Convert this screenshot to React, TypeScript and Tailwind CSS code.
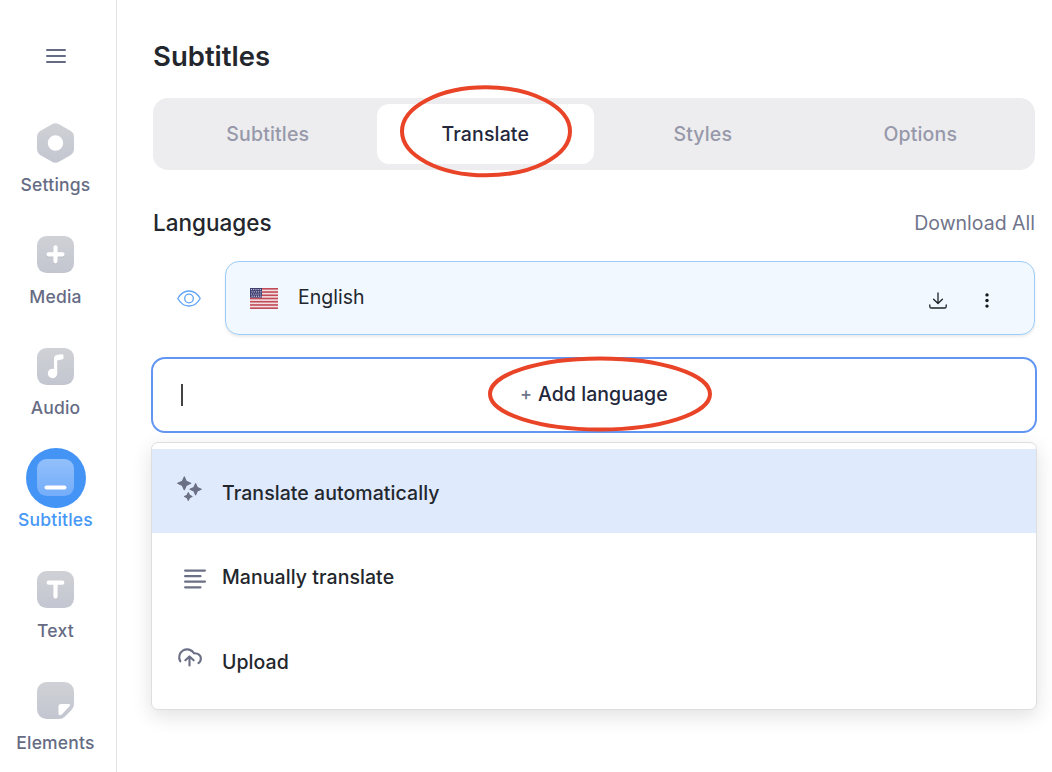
import { useState } from "react";

const TileGradient = ({ id }: { id: string }) => (
  <defs>
    <linearGradient id={id} x1="0" y1="0" x2="0" y2="1">
      <stop offset="0" stopColor="#d0d1d6" />
      <stop offset="1" stopColor="#c3c6d0" />
    </linearGradient>
  </defs>
);

const SettingsIcon = () => (
  <svg width="37" height="40" viewBox="0 0 37 40">
    <TileGradient id="settings" />
    <path
      fill="url(#settings)"
      fillRule="evenodd"
      d="M15 1.2a7 7 0 0 1 7 0L33 7.6a7.5 7.5 0 0 1 4 6.4v12a7.5 7.5 0 0 1-4 6.4L22 38.8a7 7 0 0 1-7 0L4 32.4A7.5 7.5 0 0 1 0 26V14a7.5 7.5 0 0 1 4-6.4ZM18.500 12.300a7.700 7.700 0 1 0 0 15.400a7.700 7.700 0 0 0 0-15.400Z"
    />
  </svg>
);

const MediaIcon = () => (
  <svg width="37" height="37" viewBox="0 0 37 37">
    <TileGradient id="media" />
    <rect width="37" height="37" rx="9.500" fill="url(#media)" />
    <path d="M18.500 11.300v14M11.500 18.300h14" stroke="#b3b6c1" strokeWidth="4.600" strokeLinecap="round" transform="translate(0 1)" opacity=".5" />
    <path d="M18.500 11.300v14M11.500 18.300h14" stroke="#fff" strokeWidth="4.200" strokeLinecap="round" />
  </svg>
);

const AudioIcon = () => (
  <svg width="37" height="37" viewBox="0 0 37 37">
    <TileGradient id="audio" />
    <rect width="37" height="37" rx="9.500" fill="url(#audio)" />
    <path
      fill="#fff"
      d="M17 10.500Q17 7.200 20.500 6.800L25 6.200Q26.500 6.200 26.500 7.600V10Q26.500 11.300 25 11.500L21.500 11.900Q20.200 12.100 20.200 13.400V25.500A4.700 4.700 0 1 1 17 21Z"
    />
  </svg>
);

const SubtitlesIcon = () => (
  <svg width="37" height="37" viewBox="0 0 37 37">
    <defs>
      <linearGradient id="subs" x1="0" y1="0" x2="0" y2="1">
        <stop offset="0" stopColor="#91bffb" />
        <stop offset="1" stopColor="#74adf9" />
      </linearGradient>
    </defs>
    <rect width="37" height="37" rx="9.500" fill="url(#subs)" />
    <rect x="7.500" y="26.500" width="22" height="4" rx="2" fill="#fff" />
  </svg>
);

const TextIcon = () => (
  <svg width="37" height="37" viewBox="0 0 37 37">
    <TileGradient id="text" />
    <rect width="37" height="37" rx="9.500" fill="url(#text)" />
    <path d="M11.700 11.700h13.600M18.500 12v13.500" stroke="#fff" strokeWidth="4.200" strokeLinecap="round" />
  </svg>
);

const ElementsIcon = () => (
  <svg width="37" height="37" viewBox="0 0 37 37">
    <TileGradient id="elements" />
    <path
      fill="url(#elements)"
      d="M9.500 0h18A9.500 9.500 0 0 1 37 9.500V22q0 3.500-2.500 6L28 34.500Q25.500 37 22 37H9.500A9.500 9.500 0 0 1 0 27.500v-18A9.500 9.500 0 0 1 9.500 0Z"
    />
    <path fill="#fff" d="M24 22H31.500Q34 22 32.700 24L25 32.200Q21.500 34.500 21.500 31.500V24.500Q21.500 22 24 22Z" />
  </svg>
);

const EyeIcon = () => (
  <svg width="24" height="17" viewBox="0 0 24 17" fill="none" stroke="#5ea4f8" strokeWidth="1.300">
    <path d="M.8 8.500Q5 1 12 1t11.200 7.500Q19 16 12 16T.8 8.500Z" />
    <circle cx="12" cy="8.500" r="4.300" />
  </svg>
);

const FlagIcon = () => (
  <svg width="28" height="21" viewBox="0 0 28 21">
    <rect width="28" height="21" fill="#f3dfe2" />
    {[0, 1, 2, 3, 4, 5, 6].map((i) => (
      <rect key={i} y={i * 3.23} width="28" height="1.620" fill="#c04c59" />
    ))}
    <rect width="12" height="9.700" fill="#403f72" />
    {[1.6, 3.8, 6, 8.2].map((y, row) =>
      [1.5, 3.7, 5.9, 8.1, 10.300].map((x) => (
        <circle key={`${x}-${y}`} cx={row % 2 ? x + 0.6 : x} cy={y} r=".6" fill="#e4e3ee" />
      ))
    )}
  </svg>
);

const DownloadIcon = () => (
  <svg width="18" height="17" viewBox="0 0 18 17" fill="none" stroke="#1f2328" strokeWidth="1.300" strokeLinecap="round" strokeLinejoin="round">
    <path d="M9 .8v10.600M4.600 7.200 9 11.500l4.400-4.300M.8 13v1.400q0 1.600 1.600 1.600h13.200q1.600 0 1.600-1.600V13" />
  </svg>
);

const DotsIcon = () => (
  <svg width="4" height="15" viewBox="0 0 4 15" fill="#15171a">
    <circle cx="2" cy="1.900" r="1.700" />
    <circle cx="2" cy="7.500" r="1.700" />
    <circle cx="2" cy="13.100" r="1.700" />
  </svg>
);

const SparklesIcon = () => (
  <svg width="25" height="25" viewBox="0 0 25 25" fill="#6b7086" stroke="#6b7086" strokeWidth="1.200" strokeLinejoin="round">
    <path d="M7.300.9 9.200 5.200 13.700 7.300 9.200 9.400 7.300 13.700 5.400 9.400.7 7.300 5.400 5.200Z" />
    <path d="M18.600 7.700 20.300 11.500 24.200 13.200 20.300 14.900 18.600 18.800 16.900 14.900 13 13.200 16.900 11.500Z" />
    <path d="M11.300 16.700 12.500 19.300 15 20.500 12.500 21.700 11.300 24.300 10.100 21.700 7.600 20.500 10.100 19.300Z" />
  </svg>
);

const LinesIcon = () => (
  <svg width="22" height="20" viewBox="0 0 22 20" stroke="#6b7086" strokeWidth="2.200" strokeLinecap="round">
    <path d="M1.100 1.600h19.800M1.100 7.200h15.400M1.100 12.700h19.800M1.100 18.300h15.400" />
  </svg>
);

const UploadIcon = () => (
  <svg width="25" height="21" viewBox="0 0 26 21" fill="none" stroke="#6b7086" strokeWidth="2.200" strokeLinecap="round" strokeLinejoin="round">
    <path d="M3.400 15.500A8.200 8.200 0 1 1 17.700 7.200C22 6.800 24.800 9.500 24.800 12.600Q24.800 15.800 22.300 17.300" />
    <path d="M13 19.800V10.700M8.700 14.500 13 10.400l4.300 4.100" />
  </svg>
);

const navItems = [
  { label: "Settings", icon: <SettingsIcon /> },
  { label: "Media", icon: <MediaIcon /> },
  { label: "Audio", icon: <AudioIcon /> },
  { label: "Subtitles", icon: <SubtitlesIcon /> },
  { label: "Text", icon: <TextIcon /> },
  { label: "Elements", icon: <ElementsIcon /> },
];

const tabs = ["Subtitles", "Translate", "Styles", "Options"];

const options = [
  { label: "Translate automatically", icon: <SparklesIcon />, iconClass: "pl-[0.500px] -mt-[10px]" },
  { label: "Manually translate", icon: <LinesIcon />, iconClass: "pl-2 mt-px" },
  { label: "Upload", icon: <UploadIcon />, iconClass: "pl-[0.500px] -mt-[11px]" },
];

export default function App() {
  const [page, setPage] = useState("Subtitles");
  const [tab, setTab] = useState("Translate");
  const [active, setActive] = useState(0);

  return (
    <div className="flex h-[772px] w-[1052px] overflow-hidden bg-white font-['Inter',sans-serif] text-[#23272d]">
      <aside className="flex w-[117px] shrink-0 flex-col items-center border-r border-[#e3e3e6] pr-[5px]">
        <button className="mt-[49px] flex h-[14px] w-5 flex-col justify-between">
          <span className="h-[2px] w-full rounded bg-[#666b84]" />
          <span className="h-[2px] w-full rounded bg-[#666b84]" />
          <span className="h-[2px] w-full rounded bg-[#666b84]" />
        </button>
        <nav className="mt-[50px] flex flex-col items-center gap-[27.500px]">
          {navItems.map((item) => (
            <button
              key={item.label}
              onClick={() => setPage(item.label)}
              className={`flex w-[111px] flex-col items-center text-[17.500px] leading-6 font-medium tracking-[0.200px] ${
                page === item.label ? "text-[#4697f7]" : "text-[#666b84]"
              }`}
            >
              <span
                className={`flex size-[60px] items-center justify-center rounded-full ${
                  page === item.label ? "bg-[#4394f5]" : ""
                }`}
              >
                {item.icon}
              </span>
              {item.label}
            </button>
          ))}
        </nav>
      </aside>

      <main className="flex w-[935px] flex-col pt-9 pr-[17px] pl-9">
        <h1 className="text-[27.500px] leading-10 font-semibold">Subtitles</h1>

        <div className="mt-[22px] flex h-[72px] shrink-0 rounded-[15px] bg-[#ededef] p-[6px]">
          {tabs.map((name) => (
            <button
              key={name}
              onClick={() => setTab(name)}
              className={`relative flex-1 rounded-[12px] pt-[2px] text-[19.500px] font-medium tracking-[0.150px] ${
                tab === name ? "bg-white text-[#23273c]" : "text-[#9799aa]"
              }`}
            >
              {name}
              {name === "Translate" && (
                <svg className="absolute -top-[19px] left-[23px]" width="172" height="93" viewBox="0 0 172 93" fill="none">
                  <ellipse cx="86" cy="46.300" rx="84" ry="44" stroke="#e94427" strokeWidth="4" />
                </svg>
              )}
            </button>
          ))}
        </div>

        <div className="mt-[37px] flex h-8 items-center justify-between">
          <h2 className="text-[22.500px] font-medium">Languages</h2>
          <button className="pt-[2px] text-[19.500px] text-[#70758b]">Download All</button>
        </div>

        <div className="mt-[22px] flex items-center">
          <div className="flex w-[72px] shrink-0 justify-center">
            <EyeIcon />
          </div>
          <div className="flex h-[74px] flex-1 items-center rounded-[14px] border border-[#9ccdfa] bg-[#f1f8ff] pr-[45px] pl-6 shadow-[0_2px_3px_rgba(0,0,0,0.08)]">
            <FlagIcon />
            <span className="ml-5 text-[19.500px]">English</span>
            <div className="ml-auto flex items-center gap-[38px] pt-[5px]">
              <DownloadIcon />
              <DotsIcon />
            </div>
          </div>
        </div>

        <div className="relative -mx-[2px] mt-[22px] flex h-[76px] shrink-0 items-center rounded-[14px] border-2 border-[#6296f2] bg-white">
          <span className="ml-7 h-[22px] w-[2px] bg-[#444]" />
          <span className="ml-[337px] flex items-center text-[19.500px] font-medium text-[#23273c]">
            <span className="mr-[6px] pb-[4px] text-[18px] text-[#70758b]">+</span>
            <span className="tracking-[0.050px]">Add language</span>
          </span>
          <svg className="absolute -top-[3px] left-[335px]" width="224" height="76" viewBox="0 0 224 76" fill="none">
            <ellipse cx="112" cy="38" rx="110" ry="35.500" stroke="#e94427" strokeWidth="4" />
          </svg>
        </div>

        <ul className="-mx-[2px] mt-[9px] h-[268px] shrink-0 rounded-[7px] border-[1.500px] border-[#dedede] bg-white pt-[6px] shadow-[0_6px_20px_rgba(0,0,0,0.12)]">
          {options.map((option, i) => (
            <li
              key={option.label}
              onMouseEnter={() => setActive(i)}
              className={`flex h-[84.400px] items-center pt-[5px] pl-6 text-[19.500px] font-medium tracking-[0.060px] ${
                active === i ? "bg-[#dfeafd]" : ""
              }`}
            >
              <span className={`w-[46px] shrink-0 ${option.iconClass}`}>{option.icon}</span>
              {option.label}
            </li>
          ))}
        </ul>
      </main>
    </div>
  );
}
